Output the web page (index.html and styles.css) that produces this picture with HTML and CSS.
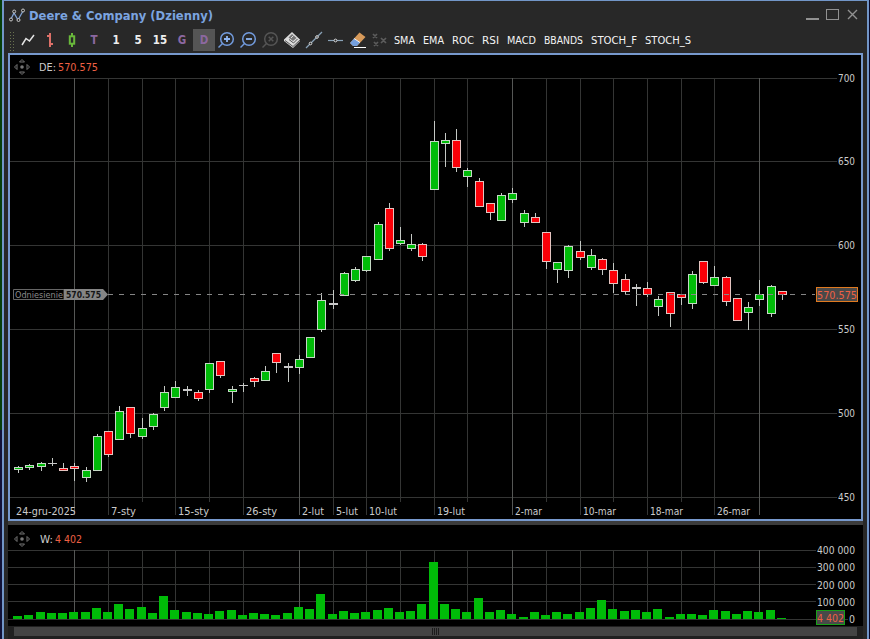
FILE: index.html
```html
<!DOCTYPE html>
<html lang="pl">
<head>
    <meta charset="UTF-8">
    <title>Deere &amp; Company (Dzienny)</title>
    <link rel="stylesheet" href="styles.css">
</head>
<body>
    <div class="window">
        <!-- Title bar -->
        <header class="titlebar">
            <svg class="logo" width="17" height="15" viewBox="0 0 17 15">
                <path d="M2 11L5 5L9 12L14 3" fill="none" stroke="#7f9fd0" stroke-width="1.3"/>
                <g fill="#282828" stroke="#c8c8c8">
                    <circle cx="2" cy="11.5" r="1.5"/><circle cx="5.2" cy="3.5" r="1.5"/>
                    <circle cx="9.5" cy="12" r="1.5"/><circle cx="14" cy="2.5" r="1.5"/>
                </g>
            </svg>
            <h1><svg width="190" height="22"><text x="0" y="15" textLength="184" lengthAdjust="spacingAndGlyphs">Deere &amp; Company (Dzienny)</text></svg></h1>
            <svg class="controls" width="54" height="14" viewBox="0 0 54 14" fill="none" stroke="#919191">
                <path d="M1 11H14" stroke-width="2"/>
                <rect x="21.5" y="1.5" width="12" height="10"/>
                <path d="M43 2L52 11M52 2L43 11" stroke-width="1.4"/>
            </svg>
        </header>

        <!-- Toolbar -->
        <nav class="toolbar">
            <span class="grip"></span>
            <button><svg viewBox="0 0 22 22"><path d="M5 16L9 9.5L12.5 12L17 6" fill="none" stroke="#e4e4e4" stroke-width="1.5"/></svg></button>
            <button><svg viewBox="0 0 22 22"><path d="M11 4V18M8 7H11M11 15H14" fill="none" stroke="#dc7068" stroke-width="2"/></svg></button>
            <button><svg viewBox="0 0 22 22"><path d="M11 4V18" stroke="#69b83b" stroke-width="2"/><rect x="8.8" y="7.3" width="4.4" height="7.4" fill="#282828" stroke="#69b83b" stroke-width="2"/></svg></button>
            <button class="purple">T</button>
            <button>1</button>
            <button>5</button>
            <button>15</button>
            <button class="purple">G</button>
            <button class="purple active">D</button>
            <button><svg viewBox="0 0 22 22" fill="none" stroke="#729bdd" stroke-width="1.5"><circle cx="12" cy="10" r="6.3"/><path d="M7.5 14.5L3.5 18.5"/><path d="M9 10H15M12 7V13" stroke="#8db5f2" stroke-width="1.8"/></svg></button>
            <button><svg viewBox="0 0 22 22" fill="none" stroke="#729bdd" stroke-width="1.5"><circle cx="12" cy="10" r="6.3"/><path d="M7.5 14.5L3.5 18.5"/><path d="M9 10H15" stroke="#8db5f2" stroke-width="1.8"/></svg></button>
            <button><svg viewBox="0 0 22 22" fill="none" stroke="#555" stroke-width="1.5"><circle cx="12" cy="10" r="6.3"/><path d="M7.5 14.5L3.5 18.5M9.7 7.7L14.3 12.3M14.3 7.7L9.7 12.3"/></svg></button>
            <button><svg viewBox="0 0 22 22"><path d="M3 10.5L11 3L19 10.5V12L12 19L3 12Z" fill="#dcdcdc"/><path d="M4 11.5L12 17.5L19 11M8 10.5L12.5 14L16.5 10" fill="none" stroke="#555"/><path d="M7.5 8.5L11 5L15.5 9L12 12Z" fill="#777"/><path d="M10 9L12.5 6.5" stroke="#ddd"/></svg></button>
            <button><svg viewBox="0 0 22 22"><path d="M3 19L19 3" stroke="#8aa3b8" stroke-width="1.2"/><circle cx="7.5" cy="14.5" r="1.3" fill="#282828" stroke="#ddd"/><circle cx="14" cy="8" r="1.3" fill="#282828" stroke="#ddd"/></svg></button>
            <button><svg viewBox="0 0 22 22"><path d="M3 11.5H18" stroke="#8aa3b8" stroke-width="1.2"/><circle cx="10.5" cy="11.5" r="1.4" fill="#282828" stroke="#ddd"/></svg></button>
            <button><svg viewBox="0 0 22 22"><path d="M3 14L12.5 3.5L18.5 8L10 17H6Z" fill="#d79a5a"/><path d="M3 14L7 9.5L13 13.5L10 17H6Z" fill="#749fdd"/><path d="M7 9.5L13 13.5" stroke="#eee"/><path d="M7 18.5H19" stroke="#fff"/></svg></button>
            <button><svg viewBox="0 0 22 22"><path d="M4 5L8 9M8 5L4 9M12 9L17 14M17 9L12 14M5 13L9 17M9 13L5 17" stroke="#5c5c5c" stroke-width="1.7"/></svg></button>
            <span class="studies" id="studies"></span>
        </nav>

        <!-- Charts -->
        <main class="charts">
            <section class="price-panel"><svg id="price" viewBox="10 55 851 464" width="851" height="464"></svg></section>
            <section class="volume-panel"><svg id="volume" viewBox="8 525 855 101" width="855" height="101"></svg></section>
            <div class="scrollbar"><span class="thumb"></span></div>
        </main>
    </div>
    <script src="chart.js"></script>
</body>
</html>
```
FILE: styles.css
```css
* {
    margin: 0;
    padding: 0;
    box-sizing: border-box;
}

body {
    width: 870px;
    height: 639px;
    overflow: hidden;
    padding: 0 1px 0 2px;
    background: linear-gradient(to right, transparent 2px, #080a2c 2px),
        linear-gradient(#063f0a 0, #063f0a 430px, #111238 430px);
    font-family: "DejaVu Sans Condensed", "DejaVu Sans", sans-serif;
    font-size: 11px;
    color: #ccc;
}

.window {
    height: 639px;
    border: 2px solid #7296c8;
    border-top: 1px solid #7296c8;
    border-bottom: 0;
    background: #282828;
}

/* Title bar */
.titlebar {
    display: flex;
    align-items: flex-start;
    height: 28px;
    padding: 7px 8px 0 5px;
}

.titlebar h1 {
    margin-left: 3px;
    margin-top: -3px;
    font-size: 13px;
    height: 22px;
}

.titlebar h1 svg {
    display: block;
    overflow: visible;
}

.titlebar h1 text {
    fill: #7ba4e0;
}

.controls {
    margin-left: auto;
}

/* Toolbar */
.toolbar {
    display: flex;
    height: 24px;
    padding-left: 5px;
}

.grip {
    width: 5px;
    height: 20px;
    margin: 2px 3px 0 0;
    background: radial-gradient(circle, #69724f 0.7px, transparent 1px) 0 0 / 3px 3px;
}

.toolbar button {
    width: 22px;
    height: 22px;
    border: 0;
    background: none;
    color: #eee;
    font: bold 11.5px "DejaVu Sans Condensed", sans-serif;
    text-align: center;
}

.toolbar button svg {
    display: block;
    width: 22px;
    height: 22px;
}

.toolbar .purple {
    color: #8c68a0;
}

.toolbar .active {
    background: #555;
}

.studies {
    display: flex;
    gap: 8px;
    margin-left: 3px;
}

.studies svg {
    overflow: visible;
}

.studies text {
    fill: #f4f4f4;
}

/* Charts */
.charts {
    margin: 0 4px;
    height: 586px;
    background: #202020;
}

.price-panel {
    height: 468px;
    border: 2px solid #7799cd;
    background: #000;
}

.volume-panel {
    height: 105px;
    border-top: 4px solid #3c3c3c;
    background: #000;
}

.price-panel svg,
.volume-panel svg {
    display: block;
}

.scrollbar {
    height: 13px;
    padding: 1px 6px 3px;
}

.thumb {
    display: block;
    height: 9px;
    background: repeating-linear-gradient(to right, #1c1c1c 0, #1c1c1c 1px, #444 1px, #444 2px) 418px 1px / 7px 7px no-repeat #444;
}

/* Chart drawing */
.grid {
    stroke: #343534;
}

.grid.month {
    stroke: #555755;
}

.up {
    fill: #00bb08;
    stroke: #c4d8c4;
}

.down {
    fill: #fa0008;
    stroke: #e4c4c0;
}

.wick {
    stroke: #c4c8c4;
}

.bar {
    fill: #00bb08;
}

.label {
    fill: #cbcbcb;
}

.value {
    fill: #ee6044;
}

.dim {
    fill: #8a8a8a;
}

.tag {
    fill: #151515;
}

.reference {
    stroke: #858585;
    stroke-dasharray: 5 6;
}
```
FILE: chart.js
```javascript
// high, body top, body bottom, low, direction (u = up, d = down, n = no body)
const candles = [
    [466,467,470,473,'u'], [464,465,468,470,'u'], [462,463,467,471,'u'], [458,463,464,466,'n'],
    [463,468,471,471,'d'], [463,466,469,481,'d'], [467,470,478,482,'u'], [434,436,471,471,'u'],
    [431,431,455,457,'d'], [406,411,440,440,'u'], [407,407,434,438,'d'], [418,428,437,439,'u'],
    [413,414,427,430,'u'], [386,392,408,411,'u'], [381,387,398,398,'u'], [386,389,391,396,'n'],
    [390,392,399,401,'d'], [363,363,390,393,'u'], [361,361,376,378,'d'], [386,389,392,403,'u'],
    [383,385,386,392,'n'], [377,378,382,387,'d'], [366,371,381,381,'u'], [353,353,363,373,'d'],
    [363,366,368,382,'n'], [355,359,368,374,'u'], [337,337,358,358,'u'], [293,300,330,332,'u'],
    [290,303,305,309,'n'], [272,273,296,296,'u'], [267,269,281,282,'u'], [256,256,271,272,'u'],
    [222,224,260,260,'u'], [203,208,249,251,'d'], [227,240,244,245,'u'], [234,244,249,251,'u'],
    [243,244,257,261,'d'], [121,141,190,190,'u'], [133,140,144,167,'u'], [129,140,168,172,'d'],
    [168,170,177,187,'u'], [178,181,207,207,'d'], [203,203,213,220,'d'], [193,195,221,221,'u'],
    [188,193,200,203,'u'], [210,213,223,227,'u'], [213,217,223,223,'d'], [232,232,262,269,'d'],
    [262,262,270,283,'u'], [245,246,271,278,'u'], [241,251,258,260,'d'], [249,255,268,270,'u'],
    [258,259,270,275,'d'], [263,270,284,293,'d'], [274,279,292,294,'d'], [284,287,289,306,'n'],
    [282,288,295,297,'d'], [296,299,307,316,'u'], [292,292,314,327,'d'], [294,294,298,305,'d'],
    [271,274,304,309,'u'], [261,261,283,284,'d'], [266,277,286,286,'u'], [276,277,302,306,'d'],
    [298,298,321,321,'d'], [302,307,313,330,'u'], [280,294,300,306,'u'], [285,286,314,317,'u'],
    [291,291,295,300,'d']
];

const volumes = [
    3,4,7,6,6,7,7,11,7,15,10,12,6,23,9,7,6,5,8,9,4,6,5,4,6,12,10,25,5,8,6,7,9,11,7,
    8,15,57,15,10,7,21,7,9,5,2,7,4,7,5,7,11,19,10,8,9,7,10,2,5,5,4,9,8,5,8,7,9,1
];

// x, kind (m = month start, l = labelled, s = short)
const columns = [
    [74,'m'], [108,'l'], [142,'s'], [175,'l'], [209,'s'], [243,'l'], [299,'m'], [333,'l'],
    [366,'l'], [400,'s'], [434,'l'], [467,'s'], [512,'m'], [546,'s'], [580,'l'], [613,'s'],
    [647,'l'], [681,'s'], [714,'l'], [759,'m']
];

const dates = [
    [16,'24-gru-2025',60], [111,'7-sty',25], [178,'15-sty',31], [246,'26-sty',31],
    [302,'2-lut',22], [336,'5-lut',22], [369,'10-lut',28], [437,'19-lut',28],
    [515,'2-mar',27], [583,'10-mar',33], [650,'18-mar',33], [717,'26-mar',33]
];

const studies = [['SMA',21], ['EMA',21], ['ROC',22], ['RSI',17], ['MACD',29], ['BBANDS',39], ['STOCH_F',46], ['STOCH_S',46]];

const center = i => 18 + Math.floor(11.231 * i + 0.62);
const line = (x1, y1, x2, y2, cls) => `<line x1="${x1}" y1="${y1}" x2="${x2}" y2="${y2}" class="${cls}"/>`;
const text = (x, y, w, s, cls = 'label') =>
    `<text x="${x}" y="${y}" textLength="${w}" lengthAdjust="spacingAndGlyphs" class="${cls}">${s}</text>`;

// Four-way move handle
function handle(x, y) {
    return `<g transform="translate(${x} ${y})" fill="none" stroke="#777">
        <path d="M-2.5 -5L0 -7.5L2.5 -5ZM-2.5 5L0 7.5L2.5 5ZM-5 -2.5L-7.5 0L-5 2.5ZM5 -2.5L7.5 0L5 2.5Z"/>
        <circle r="1.8" fill="#777" stroke="none"/></g>`;
}

function drawPrice() {
    let out = '';
    [78, 161, 245, 329, 413, 497].forEach((y, i) => {
        out += line(10, y + .5, 837, y + .5, 'grid');
        out += text(838, y + 4, 17, 700 - i * 50);
    });
    columns.forEach(([x, kind]) => {
        out += line(x + .5, 78, x + .5, kind === 's' ? 502 : 515, kind === 'm' ? 'grid month' : 'grid');
    });
    candles.forEach(([high, top, bottom, low, dir], i) => {
        const x = center(i) + .5;
        out += line(x, high, x, low, 'wick');
        if (dir === 'n') {
            out += `<rect x="${x - 4.5}" y="${top}" width="9" height="${bottom - top}" fill="#c8c8c8"/>`;
        } else {
            out += `<rect x="${x - 4}" y="${top + .5}" width="8" height="${bottom - top - 1}" class="${dir === 'u' ? 'up' : 'down'}"/>`;
        }
    });
    dates.forEach(([x, s, w]) => out += text(x, 515, w, s));

    // Reference price
    out += line(108, 294.5, 815, 294.5, 'reference');
    out += '<path d="M13.5 289.5H64V299.5H13.5Z" fill="#000" stroke="#666"/>';
    out += '<path d="M64 289H103L108 294.5L103 300H64Z" fill="#858585"/>';
    out += `<g font-size="9.5">${text(15, 298, 48, 'Odniesienie', 'dim')}</g>`;
    out += `<g font-size="9.5" font-weight="bold">${text(66, 298, 35, '570.575', 'tag')}</g>`;
    out += '<rect x="816.5" y="287.5" width="41" height="14" fill="#494949" stroke="#e07a20"/>';
    out += text(817, 299, 40, '570.575', 'value');

    out += handle(22, 67) + text(39, 71, 17, 'DE:') + text(58, 71, 40, '570.575', 'value');
    document.getElementById('price').innerHTML = out;
}

function drawVolume() {
    let out = '';
    [550, 567, 584, 601, 619].forEach(y => out += line(8, y + .5, y === 619 ? 848 : 816, y + .5, 'grid'));
    columns.forEach(([x, kind]) => out += line(x + .5, 550, x + .5, 619, kind === 'm' ? 'grid month' : 'grid'));
    volumes.forEach((v, i) => {
        out += `<rect x="${center(i) - 5}" y="${619 - v}" width="9" height="${v}" class="bar"/>`;
    });
    ['400 000', '300 000', '200 000', '100 000'].forEach((s, i) => out += text(817, 554 + i * 17.4, 38, s));
    out += text(849, 623, 6, '0');
    out += '<rect x="816.5" y="610.5" width="28" height="14" fill="#494949" stroke="#18a018"/>';
    out += text(817, 622, 27, '4 402', 'value');
    out += handle(22, 539) + text(40, 543, 13, 'W:') + text(55, 543, 27, '4 402', 'value');
    document.getElementById('volume').innerHTML = out;
}

document.getElementById('studies').innerHTML = studies
    .map(([s, w]) => `<svg width="${w}" height="22">${text(0, 15, w, s)}</svg>`).join('');
drawPrice();
drawVolume();
```
